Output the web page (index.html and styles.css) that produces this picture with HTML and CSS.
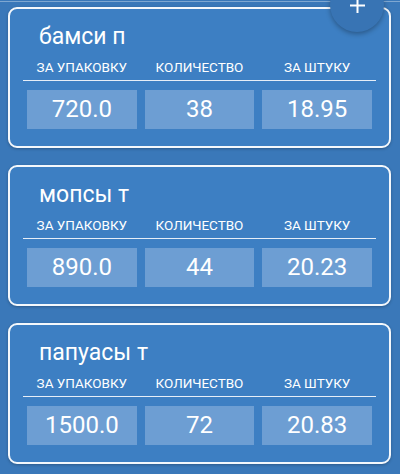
FILE: index.html
```html
<!DOCTYPE html>
<html lang="ru">
<head>
  <meta charset="UTF-8">
  <title>Упаковки</title>
  <link rel="stylesheet" href="styles.css">
</head>
<body>
  <div class="edge"></div>
  <div class="list">
    <div class="card">
      <div class="name">бамси п</div>
      <div class="head">
        <span>ЗА УПАКОВКУ</span><span>КОЛИЧЕСТВО</span><span>ЗА ШТУКУ</span>
      </div>
      <div class="vals">
        <div class="val">720.0</div><div class="val">38</div><div class="val">18.95</div>
      </div>
    </div>
    <div class="card">
      <div class="name">мопсы т</div>
      <div class="head">
        <span>ЗА УПАКОВКУ</span><span>КОЛИЧЕСТВО</span><span>ЗА ШТУКУ</span>
      </div>
      <div class="vals">
        <div class="val">890.0</div><div class="val">44</div><div class="val">20.23</div>
      </div>
    </div>
    <div class="card">
      <div class="name">папуасы т</div>
      <div class="head">
        <span>ЗА УПАКОВКУ</span><span>КОЛИЧЕСТВО</span><span>ЗА ШТУКУ</span>
      </div>
      <div class="vals">
        <div class="val">1500.0</div><div class="val">72</div><div class="val">20.83</div>
      </div>
    </div>
  </div>
  <button class="fab">
    <svg width="15" height="15" viewBox="0 0 15 15"><path d="M7.5 0v15M0 7.5h15" stroke="#fff" stroke-width="2"/></svg>
  </button>
</body>
</html>
```

FILE: styles.css
```css
body { margin: 0; background: #3a78b9; font-family: Roboto, "Noto Sans", sans-serif; color: #fff; overflow: hidden; height: 474px; position: relative; }
.edge { height: 1px; margin-top: 1px; background: rgba(255,255,255,0.35); }
.list { display: flex; flex-direction: column; gap: 17px; padding: 5px 9px 0 8px; }
.card { box-sizing: border-box; height: 141px; border: 2px solid #f4f8fc; border-radius: 9px; background: #3d7fc3; padding: 15px 13px 0 13px; box-shadow: 0 1px 3px rgba(0,0,0,0.25); }
.name { font-size: 23px; line-height: 26px; padding-left: 16px; }
.head { display: grid; grid-template-columns: repeat(3, 1fr); gap: 8px; margin-top: 9px; padding: 0 4px 5px; border-bottom: 1.5px solid #e6eef8; font-size: 13.5px; line-height: 16px; text-align: center; }
.vals { display: grid; grid-template-columns: repeat(3, 1fr); gap: 8px; margin-top: 9px; padding: 0 4px; }
.val { height: 39px; background: #6d9ed3; font-size: 24px; line-height: 39px; text-align: center; }
.fab { position: absolute; left: 330px; top: -22px; width: 54px; height: 54px; border: none; border-radius: 50%; background: #3874b4; box-shadow: 0 2px 5px rgba(0,0,0,0.3); display: flex; align-items: center; justify-content: center; padding: 0; }
```
